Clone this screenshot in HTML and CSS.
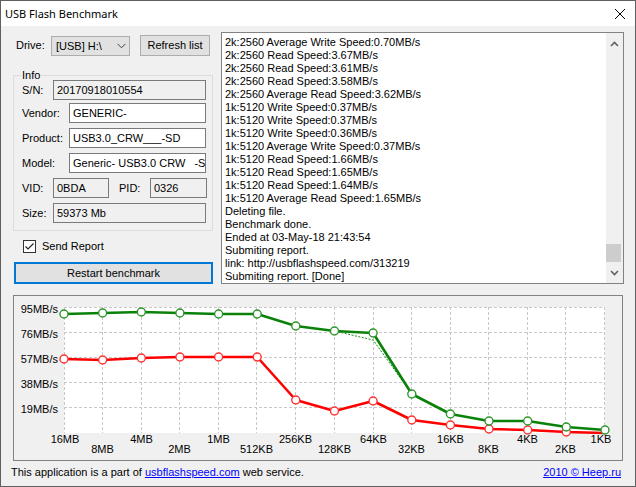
FILE: index.html
```html
<!DOCTYPE html>
<html>
<head>
<meta charset="utf-8">
<link rel="stylesheet" href="styles.css">
</head>
<body>
<div class="window">
  <div class="titlebar">
    <span class="title">USB Flash Benchmark</span>
    <svg class="close" width="12" height="12" viewBox="0 0 12 12"><path d="M1 1 L11 11 M11 1 L1 11" stroke="#000" stroke-width="1" fill="none"/></svg>
  </div>
  <div class="main">
    <div class="toprow">
      <div class="leftcol">
        <div class="driverow">
          <span class="drivelabel">Drive:</span>
          <div class="combo"><span>[USB] H:\</span><svg class="chev" width="9" height="6" viewBox="0 0 9 6"><path d="M0.5 0.8 L4.5 4.8 L8.5 0.8" stroke="#444" stroke-width="1" fill="none"/></svg></div>
          <div class="btn refresh">Refresh list</div>
        </div>
        <fieldset class="info">
          <legend>Info</legend>
          <div class="row r-sn"><span class="lbl short">S/N:</span><div class="field ro wide">20170918010554</div></div>
          <div class="row r-vendor"><span class="lbl long">Vendor:</span><div class="field">GENERIC-</div></div>
          <div class="row"><span class="lbl long">Product:</span><div class="field">USB3.0_CRW___-SD</div></div>
          <div class="row"><span class="lbl long">Model:</span><div class="field">Generic- USB3.0 CRW &nbsp;&nbsp;-SD</div></div>
          <div class="row"><span class="lbl short">VID:</span><div class="field ro vid">0BDA</div><span class="lbl pidl">PID:</span><div class="field ro pid">0326</div></div>
          <div class="row"><span class="lbl short">Size:</span><div class="field ro wide">59373 Mb</div></div>
        </fieldset>
        <div class="checkrow">
          <svg class="checkbox" width="13" height="13" viewBox="0 0 13 13"><rect x="0.5" y="0.5" width="12" height="12" fill="#fff" stroke="#333"/><path d="M2.5 6.5 L5 9 L10.5 3.5" stroke="#222" stroke-width="1.2" fill="none"/></svg>
          <span>Send Report</span>
        </div>
        <div class="btn restart">Restart benchmark</div>
      </div>
      <div class="log">
        <div class="logtext">
          <div>2k:2560 Average Write Speed:0.70MB/s</div>
          <div>2k:2560 Read Speed:3.67MB/s</div>
          <div>2k:2560 Read Speed:3.61MB/s</div>
          <div>2k:2560 Read Speed:3.58MB/s</div>
          <div>2k:2560 Average Read Speed:3.62MB/s</div>
          <div>1k:5120 Write Speed:0.37MB/s</div>
          <div>1k:5120 Write Speed:0.37MB/s</div>
          <div>1k:5120 Write Speed:0.36MB/s</div>
          <div>1k:5120 Average Write Speed:0.37MB/s</div>
          <div>1k:5120 Read Speed:1.66MB/s</div>
          <div>1k:5120 Read Speed:1.65MB/s</div>
          <div>1k:5120 Read Speed:1.64MB/s</div>
          <div>1k:5120 Average Read Speed:1.65MB/s</div>
          <div>Deleting file.</div>
          <div>Benchmark done.</div>
          <div>Ended at 03-May-18 21:43:54</div>
          <div>Submiting report.</div>
          <div>link: http://usbflashspeed.com/313219</div>
          <div>Submiting report. [Done]</div>
        </div>
        <div class="scrollbar">
          <svg class="arrow" width="9" height="6" viewBox="0 0 9 6"><path d="M1 5 L4.5 1.5 L8 5" stroke="#606060" stroke-width="1.6" fill="none"/></svg>
          <div class="track"><div class="thumb"></div></div>
          <svg class="arrow" width="9" height="6" viewBox="0 0 9 6"><path d="M1 1 L4.5 4.5 L8 1" stroke="#606060" stroke-width="1.6" fill="none"/></svg>
        </div>
      </div>
    </div>
    <div class="chart">
      <svg width="608" height="164" viewBox="14 296 608 164" font-family="Liberation Sans, Arial, sans-serif" font-size="11">
        <rect x="64" y="307" width="541" height="126" fill="#fff"/>
        <g stroke="#c8c8c8" stroke-width="1" stroke-dasharray="3,2" fill="none">
          <path d="M64 307.5H605M64 332.5H605M64 357.5H605M64 382.5H605M64 407.5H605"/>
          <path d="M64.5 307V433M102.5 307V433M141.5 307V433M179.5 307V433M218.5 307V433M256.5 307V433M295.5 307V433M334.5 307V433M373.5 307V433M411.5 307V433M450.5 307V433M488.5 307V433M527.5 307V433M565.5 307V433M604.5 307V433"/>
        </g>
        <g fill="#000" text-anchor="end">
          <text x="58" y="313">95MB/s</text>
          <text x="58" y="338">76MB/s</text>
          <text x="58" y="363">57MB/s</text>
          <text x="58" y="388">38MB/s</text>
          <text x="58" y="413">19MB/s</text>
        </g>
        <g fill="#000" text-anchor="middle">
          <text x="65" y="443">16MB</text>
          <text x="102.5" y="453">8MB</text>
          <text x="141.5" y="443">4MB</text>
          <text x="179.5" y="453">2MB</text>
          <text x="218.5" y="443">1MB</text>
          <text x="256.5" y="453">512KB</text>
          <text x="295.5" y="443">256KB</text>
          <text x="334.5" y="453">128KB</text>
          <text x="373.5" y="443">64KB</text>
          <text x="411.5" y="453">32KB</text>
          <text x="450.5" y="443">16KB</text>
          <text x="488.5" y="453">8KB</text>
          <text x="527.5" y="443">4KB</text>
          <text x="565.5" y="453">2KB</text>
          <text x="601" y="443">1KB</text>
        </g>
        <polyline fill="none" stroke="#ff0000" stroke-width="2.6" stroke-linejoin="round" points="64,359 102.6,360 141.3,358 179.9,357 218.6,357 257.2,357 295.8,400 334.5,411 373.1,401 411.8,420 450.4,425 489,429 527.7,430 566.3,432 605,433"/>
        <g fill="#fff" stroke="#ff3030" stroke-width="1.4">
          <circle cx="64" cy="359" r="4"/><circle cx="102.6" cy="360" r="4"/><circle cx="141.3" cy="358" r="4"/><circle cx="179.9" cy="357" r="4"/><circle cx="218.6" cy="357" r="4"/><circle cx="257.2" cy="357" r="4"/><circle cx="295.8" cy="400" r="4"/><circle cx="334.5" cy="411" r="4"/><circle cx="373.1" cy="401" r="4"/><circle cx="411.8" cy="420" r="4"/><circle cx="450.4" cy="425" r="4"/><circle cx="489" cy="429" r="4"/><circle cx="527.7" cy="430" r="4"/><circle cx="566.3" cy="432" r="4"/>
        </g>
        <polyline fill="none" stroke="#1a8c1a" stroke-width="1" stroke-dasharray="2,1.5" points="334.5,331 373.1,340 411.8,394"/>
        <polyline fill="none" stroke="#0a820a" stroke-width="2.6" stroke-linejoin="round" points="64,314 102.6,313 141.3,312 179.9,313 218.6,314 257.2,314 295.8,326 334.5,331 373.1,333 411.8,394 450.4,414 489,421 527.7,421 566.3,427 605,430"/>
        <g fill="#fff" stroke="#2c962c" stroke-width="1.4">
          <circle cx="64" cy="314" r="4"/><circle cx="102.6" cy="313" r="4"/><circle cx="141.3" cy="312" r="4"/><circle cx="179.9" cy="313" r="4"/><circle cx="218.6" cy="314" r="4"/><circle cx="257.2" cy="314" r="4"/><circle cx="295.8" cy="326" r="4"/><circle cx="334.5" cy="331" r="4"/><circle cx="373.1" cy="333" r="4"/><circle cx="411.8" cy="394" r="4"/><circle cx="450.4" cy="414" r="4"/><circle cx="489" cy="421" r="4"/><circle cx="527.7" cy="421" r="4"/><circle cx="566.3" cy="427" r="4"/><circle cx="605" cy="430" r="4"/>
        </g>
      </svg>
    </div>
    <div class="footer">
      <span>This application is a part of <a class="link">usbflashspeed.com</a> web service.</span>
      <a class="link">2010 © Heep.ru</a>
    </div>
  </div>
</div>
</body>
</html>
```

FILE: styles.css
```css
* { box-sizing: border-box; }
html, body { margin: 0; padding: 0; }
body {
  font-family: "Liberation Sans", Arial, sans-serif;
  font-size: 11px;
  line-height: 13px;
  color: #000;
  background: #f0f0f0;
}
.window {
  width: 636px;
  height: 487px;
  border: 1px solid #5f5f5f;
  display: flex;
  flex-direction: column;
  background: #f0f0f0;
  overflow: hidden;
}
.titlebar {
  height: 25px;
  background: #fff;
  display: flex;
  align-items: center;
  justify-content: space-between;
  padding: 0 9px 0 4px;
  flex: none;
}
.title {
  font-family: "Noto Sans", sans-serif;
  font-size: 11px;
  line-height: 16px;
  color: #000;
}
.close { display: block; }
.main {
  flex: 1;
  display: flex;
  flex-direction: column;
  padding: 6px 11px 0 12px;
}
.toprow {
  display: flex;
  height: 252px;
  gap: 8px;
  flex: none;
}
.leftcol {
  width: 200px;
  flex: none;
  display: flex;
  flex-direction: column;
}
.driverow {
  display: flex;
  align-items: flex-start;
  margin-top: 3px;
  height: 21px;
}
.drivelabel {
  width: 38px;
  padding-left: 3px;
  margin-top: 4px;
}
.combo {
  width: 79px;
  height: 20px;
  margin-top: 1px;
  background: #e1e1e1;
  border: 1px solid #adadad;
  display: flex;
  align-items: center;
  justify-content: space-between;
  padding: 0 3px 0 4px;
}
.chev { display: block; }
.btn {
  background: #e1e1e1;
  border: 1px solid #adadad;
  display: flex;
  align-items: center;
  justify-content: center;
}
.refresh {
  width: 70px;
  height: 21px;
  margin-left: 10px;
}
.info {
  margin: 14px 0 0 0;
  padding: 0 6px 7px 8px;
  border: 1px solid #dcdcdc;
  min-width: 0;
}
.info legend {
  padding: 0 1px;
  margin-left: -1px;
  line-height: 10px;
}
.row {
  display: flex;
  align-items: center;
  height: 20px;
  margin-top: 5px;
}
.row.r-sn { margin-top: 0; }
.row.r-vendor { margin-top: 3px; }
.lbl { flex: none; }
.lbl.short { width: 31px; }
.lbl.long { width: 47px; }
.lbl.pidl { width: 31px; margin-left: 10px; }
.field {
  flex: 1;
  height: 20px;
  border: 1px solid #7a7a7a;
  background: #fff;
  padding: 0 0 0 3px;
  display: flex;
  align-items: center;
  white-space: nowrap;
  overflow: hidden;
}
.field.ro { background: #f0f0f0; }
.field.vid { flex: none; width: 56px; }
.field.pid { flex: none; width: 57px; }
.checkrow {
  display: flex;
  align-items: center;
  margin-top: 9px;
  padding-left: 10px;
  gap: 6px;
  height: 13px;
}
.checkbox { display: block; flex: none; }
.restart {
  margin-top: 9px;
  margin-left: 1px;
  height: 22px;
  border: 2px solid #0078d7;
}
.log {
  flex: 1;
  border: 1px solid #828282;
  background: #fff;
  display: flex;
  overflow: hidden;
}
.logtext {
  flex: 1;
  padding: 3px 0 0 3px;
  white-space: nowrap;
  overflow: hidden;
}
.scrollbar {
  width: 17px;
  flex: none;
  background: #f0f0f0;
  display: flex;
  flex-direction: column;
  align-items: center;
  padding: 8px 0 7px 0;
}
.arrow { display: block; flex: none; }
.track {
  flex: 1;
  width: 100%;
  display: flex;
  flex-direction: column;
  justify-content: flex-end;
  padding: 0 1px 1px 0;
}
.thumb {
  height: 18px;
  width: 15px;
  background: #cdcdcd;
  margin-bottom: 7px;
}
.chart {
  margin-top: 11px;
  width: 610px;
  height: 166px;
  border: 1px solid #828282;
  flex: none;
}
.chart svg { display: block; }
.footer {
  flex: 1;
  display: flex;
  justify-content: space-between;
  padding: 5px 3px 0 0;
  margin-left: -2px;
}
.link {
  color: #0000ff;
  text-decoration: underline;
}
```
